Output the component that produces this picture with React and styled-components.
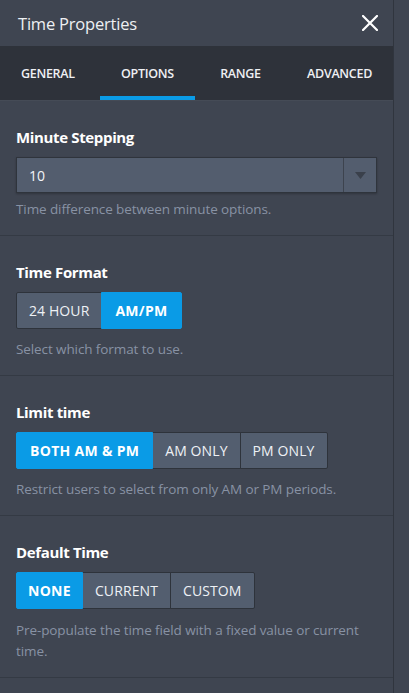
import React from "react";
import styled, { createGlobalStyle } from "styled-components";

const Global = createGlobalStyle`
  html, body { margin: 0; padding: 0; background: #3f4551; }
  body { font-family: "Open Sans", "Noto Sans", sans-serif; }
  * { box-sizing: border-box; }
`;

const Page = styled.div`
  display: flex;
  min-height: 693px;
  background: #3f4551;
`;

const Panel = styled.div`
  width: 394px;
  flex: 0 0 394px;
  border-right: 1px solid #30353e;
  background: #3f4551;
  display: flex;
  flex-direction: column;
`;

const Strip = styled.div`
  flex: 1;
  background: #3f4551;
`;

const Header = styled.div`
  height: 46px;
  display: flex;
  align-items: center;
  justify-content: space-between;
  padding: 0 15px 0 18px;
  background: #3f4551;
`;

const Title = styled.div`
  color: #eef0f3;
  font-size: 16.5px;
  line-height: 24px;
  padding-top: 2px;
  letter-spacing: -0.2px;
`;

const CloseBtn = styled.button`
  border: 0;
  background: none;
  padding: 0;
  width: 17px;
  height: 17px;
  display: flex;
  align-items: center;
  justify-content: center;
  cursor: pointer;
`;

const TabBar = styled.div`
  height: 55px;
  display: flex;
  justify-content: space-between;
  background: #2e323a;
  border-bottom: 1px solid #454b56;
`;

const Tab = styled.div`
  padding: 4px 21px 0;
  display: flex;
  align-items: center;
  font-size: 12.5px;
  font-weight: 600;
  color: #eef0f3;
  border-bottom: 4px solid ${(p) => (p.$active ? "#0a9be6" : "transparent")};
  letter-spacing: -0.3px;
`;

const Section = styled.div`
  padding: 26px 16px 15px 16px;
  border-bottom: 1px solid #343a44;
`;

const Label = styled.div`
  color: #ffffff;
  font-size: 15px;
  font-weight: 700;
  line-height: 20px;
  margin-bottom: 10px;
  letter-spacing: -0.35px;
`;

const Desc = styled.div`
  color: #8892a4;
  font-size: 13.5px;
  line-height: 21px;
  letter-spacing: -0.1px;
  margin-top: ${(p) => p.$mt || 10}px;
`;

const Select = styled.div`
  height: 36px;
  display: flex;
  background: #535d6e;
  border: 1px solid #2f343c;
  box-shadow: 0 1px 2px rgba(0, 0, 0, 0.25);
`;

const SelectValue = styled.div`
  flex: 1;
  display: flex;
  align-items: center;
  padding-left: 12px;
  color: #f2f4f7;
  font-size: 14px;
`;

const SelectArrow = styled.div`
  width: 33px;
  border-left: 1px solid #3d434e;
  display: flex;
  align-items: center;
  justify-content: center;
`;

const Group = styled.div`
  display: inline-flex;
  height: 37px;
`;

const Btn = styled.div`
  display: flex;
  align-items: center;
  justify-content: center;
  padding: 0 ${(p) => p.$px || 12}px;
  font-size: 14px;
  font-weight: ${(p) => (p.$active ? 700 : 400)};
  color: ${(p) => (p.$active ? "#ffffff" : "#eef1f5")};
  background: ${(p) => (p.$active ? "#0a9be6" : "#535e6f")};
  border: 1px solid ${(p) => (p.$active ? "#0a9be6" : "#2e333b")};
  margin-left: -1px;
  &:first-child { margin-left: 0; border-radius: 2px 0 0 2px; }
  &:last-child { border-radius: 0 2px 2px 0; }
  position: relative;
  z-index: ${(p) => (p.$active ? 1 : 0)};
  letter-spacing: ${(p) => (p.$active ? "0.3px" : "0.1px")};
`;

const Rest = styled.div`
  flex: 1;
`;

const tabs = ["GENERAL", "OPTIONS", "RANGE", "ADVANCED"];

function ButtonGroup({ items, active }) {
  return (
    <Group>
      {items.map((it) => (
        <Btn key={it.label} $active={it.label === active} $px={it.px}>
          {it.label}
        </Btn>
      ))}
    </Group>
  );
}

export default function App() {
  return (
    <>
      <Global />
      <Page>
        <Panel>
          <Header>
            <Title>Time Properties</Title>
            <CloseBtn aria-label="close">
              <svg width="16" height="16" viewBox="0 0 16 16">
                <path d="M1 1 L15 15 M15 1 L1 15" stroke="#ffffff" strokeWidth="2.2" strokeLinecap="square" />
              </svg>
            </CloseBtn>
          </Header>
          <TabBar>
            {tabs.map((t) => (
              <Tab key={t} $active={t === "OPTIONS"}>{t}</Tab>
            ))}
          </TabBar>

          <Section>
            <Label>Minute Stepping</Label>
            <Select>
              <SelectValue>10</SelectValue>
              <SelectArrow>
                <svg width="11" height="7" viewBox="0 0 11 7">
                  <path d="M0 0 H11 L5.5 7 Z" fill="#3a404b" />
                </svg>
              </SelectArrow>
            </Select>
            <Desc $mt={6}>Time difference between minute options.</Desc>
          </Section>

          <Section>
            <Label>Time Format</Label>
            <ButtonGroup
              active="AM/PM"
              items={[{ label: "24 HOUR", px: 12 }, { label: "AM/PM", px: 13 }]}
            />
            <Desc>Select which format to use.</Desc>
          </Section>

          <Section>
            <Label>Limit time</Label>
            <ButtonGroup
              active="BOTH AM & PM"
              items={[
                { label: "BOTH AM & PM", px: 13 },
                { label: "AM ONLY", px: 12 },
                { label: "PM ONLY", px: 12 },
              ]}
            />
            <Desc>Restrict users to select from only AM or PM periods.</Desc>
          </Section>

          <Section>
            <Label>Default Time</Label>
            <ButtonGroup
              active="NONE"
              items={[
                { label: "NONE", px: 11 },
                { label: "CURRENT", px: 12 },
                { label: "CUSTOM", px: 12 },
              ]}
            />
            <Desc $mt={11}>Pre-populate the time field with a fixed value or current time.</Desc>
          </Section>
          <Rest />
        </Panel>
        <Strip />
      </Page>
    </>
  );
}
